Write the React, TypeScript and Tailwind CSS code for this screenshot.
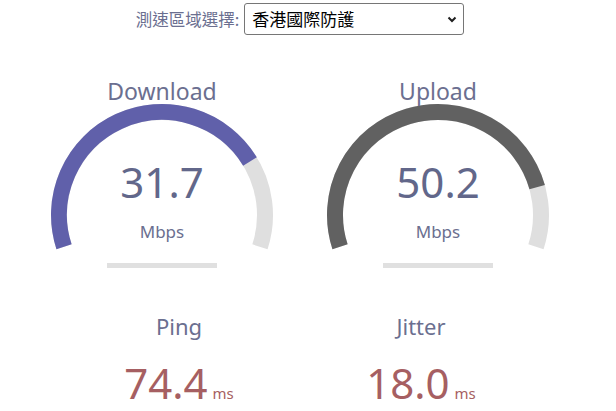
import React from "react";

type GaugeProps = {
  label: string;
  value: string;
  unit: string;
  amount: number;
  color: string;
};

const CX = 138;
const CY = 145;
const R = 103;
const START = 162;
const SWEEP = 216;

const toAmount = (mbps: number) => 1 - 1 / Math.pow(1.3, Math.sqrt(mbps));

const arcPath = (from: number, to: number) => {
  const a = (from * Math.PI) / 180;
  const b = (to * Math.PI) / 180;
  const x0 = CX + R * Math.cos(a);
  const y0 = CY + R * Math.sin(a);
  const x1 = CX + R * Math.cos(b);
  const y1 = CY + R * Math.sin(b);
  const large = to - from > 180 ? 1 : 0;
  return `M ${x0} ${y0} A ${R} ${R} 0 ${large} 1 ${x1} ${y1}`;
};

const Gauge = ({ label, value, unit, amount, color }: GaugeProps) => {
  return (
    <div className="relative flex h-[200px] w-[276px] flex-col items-center pt-[7px]">
      <svg
        className="absolute left-0 top-0"
        width={276}
        height={200}
        viewBox="0 0 276 200"
      >
        <path
          d={arcPath(START, START + SWEEP)}
          fill="none"
          stroke="#dfdfdf"
          strokeWidth={16}
        />
        <path
          d={arcPath(START, START + SWEEP * amount)}
          fill="none"
          stroke={color}
          strokeWidth={16}
        />
      </svg>
      <div className="relative text-[23px] leading-[28px] text-[#6b6f90]">
        {label}
      </div>
      <div className="relative mt-[52px] text-[42px] leading-[50px] text-[#62678a]">
        {value}
      </div>
      <div className="relative mt-[15px] text-[17px] leading-[20px] text-[#6b6f90]">
        {unit}
      </div>
      <div className="relative mt-[21px] h-[5px] w-[110px] bg-[#e0e0e0]" />
    </div>
  );
};

const Stat = ({ label, value }: { label: string; value: string }) => {
  return (
    <div className="flex w-[242px] flex-col items-center">
      <div className="text-[22px] leading-[28px] text-[#6b6f90]">{label}</div>
      <div className="mt-[18px] flex items-baseline text-[#a65f62]">
        <span className="text-[42px] leading-[50px]">{value}</span>
        <span className="ml-[5px] text-[15px] leading-[20px]">ms</span>
      </div>
    </div>
  );
};

export default function App() {
  return (
    <div
      className="flex h-[411px] w-[600px] flex-col items-center overflow-hidden bg-white"
      style={{ fontFamily: '"Noto Sans", "Noto Sans CJK TC", sans-serif' }}
    >
      <div className="flex h-[38px] items-start pt-[3px]">
        <span className="mr-[5px] mt-[5px] font-['Noto_Sans_CJK_TC',sans-serif] text-[16.5px] leading-[22px] text-[#6b6f90]">
          測速區域選擇:
        </span>
        <div className="relative">
          <select className="h-[32px] w-[220px] appearance-none rounded-[3px] border border-[#767676] bg-white pl-[7px] font-['Noto_Sans_CJK_TC',sans-serif] text-[17px] leading-[22px] text-black">
            <option>香港國際防護</option>
          </select>
          <svg
            className="pointer-events-none absolute right-[7px] top-[13px]"
            width="10"
            height="7"
            viewBox="0 0 10 7"
          >
            <polyline
              points="1.5,1.5 5,5 8.5,1.5"
              fill="none"
              stroke="#1f1f1f"
              strokeWidth="2"
            />
          </svg>
        </div>
      </div>
      <div className="mt-[32px] flex">
        <Gauge
          label="Download"
          value="31.7"
          unit="Mbps"
          amount={toAmount(31.7)}
          color="#6060aa"
        />
        <Gauge
          label="Upload"
          value="50.2"
          unit="Mbps"
          amount={toAmount(50.2)}
          color="#616161"
        />
      </div>
      <div className="mt-[42px] flex">
        <Stat label="Ping" value="74.4" />
        <Stat label="Jitter" value="18.0" />
      </div>
    </div>
  );
}
